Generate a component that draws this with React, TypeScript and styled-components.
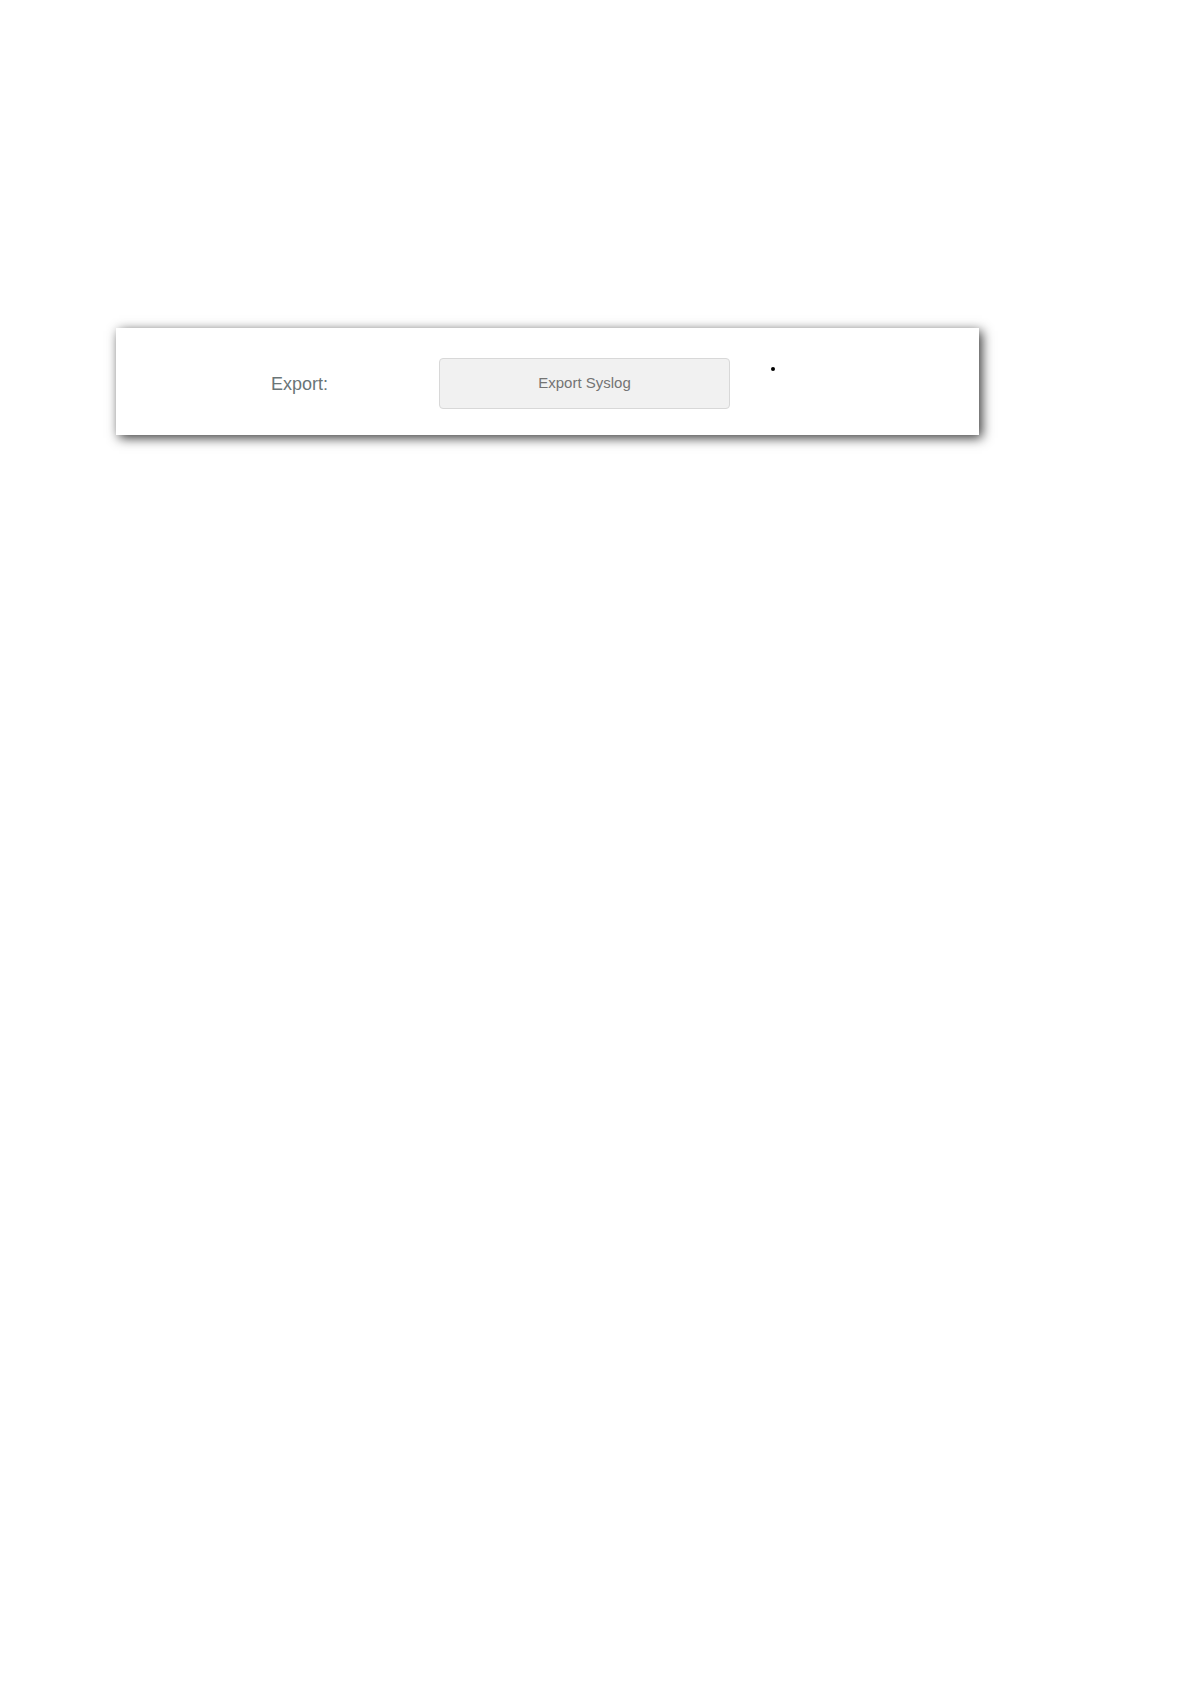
import styled, { createGlobalStyle } from "styled-components";

const GlobalStyle = createGlobalStyle`
  *, *::before, *::after {
    box-sizing: border-box;
  }

  body {
    margin: 0;
    background: #ffffff;
    font-family: "Liberation Sans", Arial, Helvetica, sans-serif;
  }
`;

const Page = styled.main`
  padding: 328px 212px 64px 116px;
`;

const Card = styled.section`
  display: grid;
  grid-template-columns: 168fr 291fr 249fr;
  padding: 30px 0 26px 155px;
  background: #ffffff;
  box-shadow: 3px 3px 11px rgba(0, 0, 0, 0.78);
`;

const FieldLabel = styled.label`
  align-self: center;
  color: #6a7577;
  font-size: 18px;
  line-height: 24px;
`;

const ExportButton = styled.button`
  min-width: 0;
  padding: 12px 16px 13px;
  border: 1px solid #d8d8d8;
  border-radius: 4px;
  background: #f1f1f1;
  color: #747474;
  font: inherit;
  font-size: 15px;
  line-height: 24px;
  cursor: pointer;
`;

const StatusDot = styled.span`
  width: 4px;
  height: 4px;
  margin: 9px 0 0 41px;
  border-radius: 50%;
  background: #000000;
`;

export default function App() {
  return (
    <>
      <GlobalStyle />
      <Page>
        <Card>
          <FieldLabel htmlFor="export-syslog">Export:</FieldLabel>
          <ExportButton id="export-syslog" type="button">
            Export Syslog
          </ExportButton>
          <StatusDot />
        </Card>
      </Page>
    </>
  );
}
